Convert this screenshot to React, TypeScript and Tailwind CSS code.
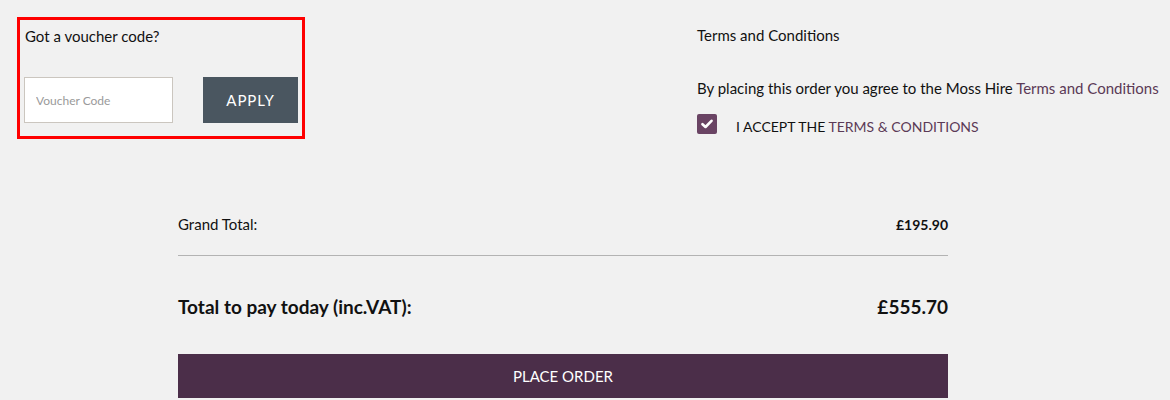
import React, { useState } from 'react';

const font = "font-['Lato','Open_Sans',sans-serif]";

function VoucherBox() {
  const [code, setCode] = useState('');
  return (
    <div className="ml-[17px] w-[288px] h-[122px] border-[3px] border-[#ff0000] px-[4px] pt-[6px]">
      <p className="text-[15px] leading-[20px] text-[#111] pl-[1px]">Got a voucher code?</p>
      <div className="flex items-center gap-[30px] mt-[31px]">
        <input
          type="text"
          value={code}
          onChange={(e) => setCode(e.target.value)}
          placeholder="Voucher Code"
          className="w-[149px] h-[46px] bg-white border border-[#cbc6bf] px-[11px] text-[12px] text-[#333] placeholder-[#9a9a9a] outline-none"
        />
        <button className="w-[97px] h-[46px] bg-[#4a5660] text-white text-[15px] tracking-[0.06em]">
          APPLY
        </button>
      </div>
    </div>
  );
}

function TermsColumn() {
  const [accepted, setAccepted] = useState(true);
  return (
    <div className="ml-[392px] pt-[8px] text-[15px] text-[#111]">
      <p className="leading-[20px]">Terms and Conditions</p>
      <p className="leading-[20px] mt-[33px]">
        By placing this order you agree to the Moss Hire{' '}
        <a href="#" className="text-[#5b3a56]">Terms and Conditions</a>
      </p>
      <label className="flex items-start mt-[16px] cursor-pointer">
        <span
          onClick={() => setAccepted(!accepted)}
          className="w-[20px] h-[20px] rounded-[2px] bg-[#6a4464] flex items-center justify-center"
        >
          {accepted && (
            <svg width="12" height="10" viewBox="0 0 12 10">
              <path d="M1.5 5.2 L4.5 8 L10.5 1.8" stroke="white" strokeWidth="2.6" fill="none" strokeLinecap="round" strokeLinejoin="round" />
            </svg>
          )}
        </span>
        <span className="ml-[19px] text-[14px] leading-[20px] pt-[3px]">
          I ACCEPT THE <span className="text-[#5b3a56]">TERMS &amp; CONDITIONS</span>
        </span>
      </label>
    </div>
  );
}

function Summary() {
  return (
    <div className="ml-[178px] w-[770px] text-[#111]">
      <div className="flex justify-between items-center h-[20px]">
        <span className="text-[15px]">Grand Total:</span>
        <span className="text-[14px] font-bold">£195.90</span>
      </div>
      <div className="h-px bg-[#b3b3b3] mt-[21px]" />
      <div className="flex justify-between items-center h-[24px] mt-[39px]">
        <span className="text-[19px] font-bold">Total to pay today (inc.VAT):</span>
        <span className="text-[19px] font-bold">£555.70</span>
      </div>
      <button className="mt-[35px] w-full h-[44px] bg-[#4b2e49] text-white text-[15px]">
        PLACE ORDER
      </button>
    </div>
  );
}

export default function App() {
  return (
    <div className={`min-h-screen bg-[#f1f1f1] ${font}`}>
      <div className="flex pt-[17px]">
        <VoucherBox />
        <TermsColumn />
      </div>
      <div className="mt-[75px]">
        <Summary />
      </div>
    </div>
  );
}
